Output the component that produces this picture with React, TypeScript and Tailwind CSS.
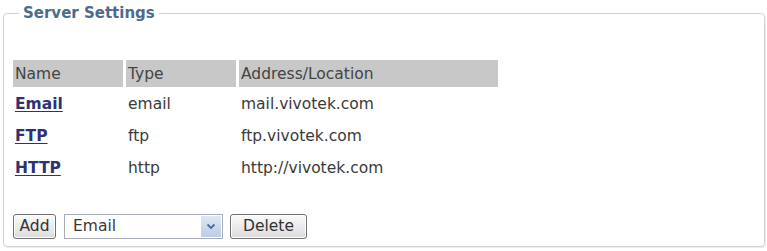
const servers = [
  { name: "Email", type: "email", address: "mail.vivotek.com" },
  { name: "FTP", type: "ftp", address: "ftp.vivotek.com" },
  { name: "HTTP", type: "http", address: "http://vivotek.com" },
];

function Button({ label, width }: { label: string; width: string }) {
  return (
    <button
      type="button"
      className={`${width} h-[25px] rounded-[3px] border border-[#707070] bg-gradient-to-b from-[#fafafa] to-[#dcdcdc] text-[15.5px] leading-none text-[#333] shadow-[inset_0_0_0_1px_#ffffff]`}
    >
      {label}
    </button>
  );
}

export default function App() {
  return (
    <div className="h-[251px] w-[767px] bg-white pl-[3px] pr-[2px] pt-[4px] font-['DejaVu_Sans',Verdana,sans-serif] text-[15.5px] text-[#3a3a3a]">
      <fieldset className="h-[243px] w-[762px] rounded-[4px] border border-[#d2d2d2] pl-[9px] shadow-[1px_1px_0_#ececec]">
        <legend className="ml-[6px] px-[4px] text-[15px] font-bold leading-[18px] text-[#4d6b8e]">
          Server Settings
        </legend>

        <div className="mt-[38px] grid w-[485px] grid-cols-[110px_110px_259px] gap-x-[3px]">
          {["Name", "Type", "Address/Location"].map((h) => (
            <div key={h} className="flex h-[27px] items-center bg-[#c8c8c8] pl-[2px] pt-[2px] text-[#444]">
              {h}
            </div>
          ))}
          {servers.map((s) => (
            <div key={s.name} className="contents">
              <div className="flex h-[32px] items-center pl-[2px] pt-[3px]">
                <a href="#" className="font-bold text-[#2f3272] underline underline-offset-[2px]">
                  {s.name}
                </a>
              </div>
              <div className="flex h-[32px] items-center pl-[2px] pt-[3px]">{s.type}</div>
              <div className="flex h-[32px] items-center pl-[2px] pt-[3px]">{s.address}</div>
            </div>
          ))}
        </div>

        <div className="mt-[31px] flex items-center">
          <Button label="Add" width="w-[43px]" />
          <div className="ml-[8px] flex h-[25px] w-[159px] items-stretch border border-[#a6acb8] bg-white">
            <span className="flex flex-1 items-center pl-[8px]">Email</span>
            <span className="m-[1px] flex w-[20px] items-center justify-center bg-gradient-to-b from-[#dfe7f4] to-[#bccce6]">
              <svg width="10" height="7" viewBox="0 0 10 7">
                <path d="M1.5 1.5 L5 5 L8.5 1.5" fill="none" stroke="#4a6aa0" strokeWidth="1.8" />
              </svg>
            </span>
          </div>
          <div className="ml-[7px]">
            <Button label="Delete" width="w-[77px]" />
          </div>
        </div>
      </fieldset>
    </div>
  );
}
